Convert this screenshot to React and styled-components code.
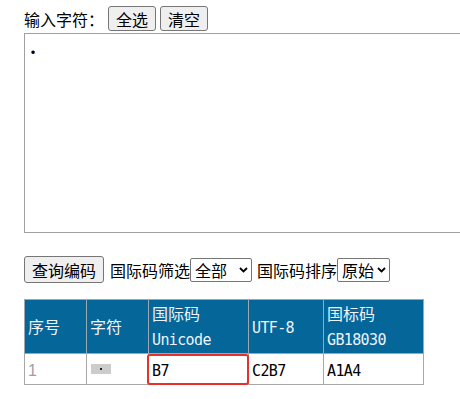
import React from "react";
import styled, { createGlobalStyle } from "styled-components";

const Global = createGlobalStyle`
  html, body { margin: 0; padding: 0; overflow: hidden; background: #fff; }
  body { font-family: "Noto Sans CJK SC", "Noto Sans", sans-serif; font-size: 16px; color: #000; }
`;

const Page = styled.div`
  padding: 6px 0 0 24px;
  width: 436px;
`;

const Row = styled.div`
  display: flex;
  align-items: center;
  gap: ${(p) => p.gap || 0}px;
  height: ${(p) => p.h || 25}px;
  margin-top: ${(p) => p.mt || 0}px;
  white-space: nowrap;
`;

const Label = styled.span`
  font-size: 16px;
  line-height: 20px;
  margin-left: ${(p) => p.ml || 0}px;
`;

const Button = styled.button`
  box-sizing: border-box;
  height: ${(p) => p.h || 25}px;
  padding: 0 7px;
  font-family: "Noto Sans CJK SC", sans-serif;
  font-size: 16px;
  line-height: 20px;
  color: #000;
  background: #efefef;
  border: 1px solid #767676;
  border-radius: 3px;
  margin: 0;
`;

const SelectWrap = styled.span`
  position: relative;
  display: inline-block;
  width: ${(p) => p.w}px;
  height: 24px;
`;

const Select = styled.select`
  appearance: none;
  -webkit-appearance: none;
  box-sizing: border-box;
  width: 100%;
  height: 24px;
  padding: 0 0 0 4px;
  font-family: "Noto Sans CJK SC", sans-serif;
  font-size: 16px;
  line-height: 22px;
  color: #000;
  background: #fff;
  border: 1px solid #767676;
  border-radius: 2px;
  margin: 0;
  outline: none;
`;

const Chevron = styled.svg`
  position: absolute;
  right: 4px;
  top: 9px;
  width: 9px;
  height: 6px;
  pointer-events: none;
`;

const Area = styled.textarea`
  display: block;
  box-sizing: border-box;
  width: 436px;
  height: 200px;
  margin: 2px 0 0 0;
  padding: 6px 0 0 0;
  border: 1px solid #a0a0a0;
  border-right: none;
  font-family: "Noto Sans CJK SC", sans-serif;
  font-size: 16px;
  line-height: 22px;
  resize: none;
  outline: none;
`;

const Table = styled.table`
  margin-top: 16px;
  border-collapse: collapse;
  table-layout: fixed;
  width: 400px;
`;

const Th = styled.th`
  width: ${(p) => p.w}px;
  box-sizing: border-box;
  background: #05669a;
  color: #eef3f7;
  font-weight: normal;
  text-align: left;
  vertical-align: middle;
  padding: 1px 3px 2px;
  font-size: 16px;
  border: 1px solid #9aa7b1;
`;

const Td = styled.td`
  position: relative;
  box-sizing: border-box;
  padding: 3px 3px;
  font-size: 16px;
  vertical-align: middle;
  border: 1px solid #a8a8a8;
  color: ${(p) => (p.dim ? "#a0a0a0" : "#000")};
`;

const Line = styled.div`
  height: ${(p) => p.h || 25}px;
  line-height: ${(p) => p.h || 25}px;
  overflow: visible;
  white-space: nowrap;
`;

const Highlight = styled.div`
  position: absolute;
  top: 0;
  left: -2px;
  right: -1px;
  bottom: -1px;
  border: 2px solid #e8302a;
  border-radius: 3px;
  pointer-events: none;
`;

const Mono = styled.span`
  font-family: "DejaVu Sans Mono", "Liberation Mono", monospace;
  font-size: 15px;
  letter-spacing: -0.63px;
`;

const Num = styled.span`
  font-family: "Liberation Sans", sans-serif;
  font-size: 16px;
`;

const CharBox = styled.div`
  display: flex;
  align-items: center;
  justify-content: center;
  width: 20px;
  height: 10px;
  margin: 7px 0 7px 1px;
  background: #cccccc;
`;

const Dot = styled.span`
  display: block;
  width: 2px;
  height: 2px;
  background: #222;
`;

const ChevronIcon = () => (
  <Chevron viewBox="0 0 9 6">
    <path d="M1 1 L4.5 4.5 L8 1" fill="none" stroke="#000" strokeWidth="1.8" />
  </Chevron>
);

export default function App() {
  return (
    <>
      <Global />
      <Page>
        <Row gap={4}>
          <Label>输入字符：</Label>
          <Button>全选</Button>
          <Button>清空</Button>
        </Row>
        <Area defaultValue="·" />
        <Row mt={23} h={27}>
          <Button h={27}>查询编码</Button>
          <Label ml={6}>国际码筛选</Label>
          <SelectWrap w={62}>
            <Select defaultValue="all">
              <option value="all">全部</option>
              <option value="cjk">中日韩汉字</option>
            </Select>
            <ChevronIcon />
          </SelectWrap>
          <Label ml={5}>国际码排序</Label>
          <SelectWrap w={53}>
            <Select defaultValue="orig">
              <option value="orig">原始</option>
              <option value="asc">升序</option>
            </Select>
            <ChevronIcon />
          </SelectWrap>
        </Row>
        <Table>
          <thead>
            <tr>
              <Th w={62}>
                <Line h={50}>序号</Line>
              </Th>
              <Th w={62}>
                <Line h={50}>字符</Line>
              </Th>
              <Th w={100}>
                <Line>国际码</Line>
                <Line>
                  <Mono>Unicode</Mono>
                </Line>
              </Th>
              <Th w={75}>
                <Line h={50}>
                  <Mono>UTF-8</Mono>
                </Line>
              </Th>
              <Th w={100}>
                <Line>国标码</Line>
                <Line>
                  <Mono>GB18030</Mono>
                </Line>
              </Th>
            </tr>
          </thead>
          <tbody>
            <tr>
              <Td dim>
                <Line h={24}>
                  <Num>1</Num>
                </Line>
              </Td>
              <Td>
                <CharBox title="·">
                  <Dot />
                </CharBox>
              </Td>
              <Td>
                <Line h={24}>
                  <Mono>B7</Mono>
                </Line>
                <Highlight />
              </Td>
              <Td>
                <Line h={24}>
                  <Mono>C2B7</Mono>
                </Line>
              </Td>
              <Td>
                <Line h={24}>
                  <Mono>A1A4</Mono>
                </Line>
              </Td>
            </tr>
          </tbody>
        </Table>
      </Page>
    </>
  );
}
